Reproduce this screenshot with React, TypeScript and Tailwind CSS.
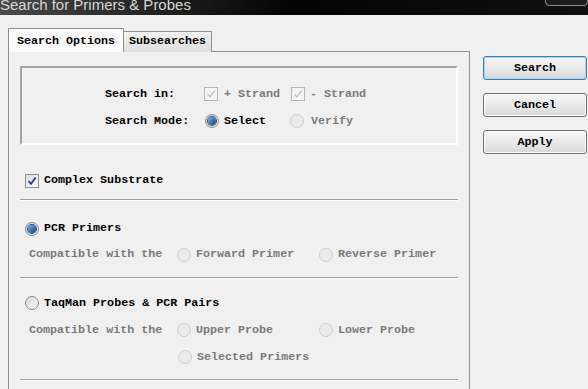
import React from "react";

const FONT = { fontFamily: '"Liberation Mono", "DejaVu Sans Mono", monospace' };

function CheckBox({ checked, disabled }: { checked?: boolean; disabled?: boolean }) {
  return (
    <span
      className={`flex h-[14px] w-[14px] shrink-0 items-center justify-center border ${
        disabled ? "border-[#b5b5b5] bg-[#f4f4f4]" : "border-[#8f8f8f] bg-gradient-to-br from-[#dcdcdc] to-[#ffffff]"
      }`}
    >
      {checked && (
        <svg width="10" height="10" viewBox="0 0 10 10">
          <path
            d="M1.5 5.2 L4 7.8 L8.6 1.6"
            fill="none"
            stroke={disabled ? "#b9b9b9" : "#2a3fa8"}
            strokeWidth={disabled ? 1.2 : 1.8}
          />
        </svg>
      )}
    </span>
  );
}

function Radio({ checked, disabled }: { checked?: boolean; disabled?: boolean }) {
  return (
    <span
      className={`flex h-[14px] w-[14px] shrink-0 items-center justify-center rounded-full border ${
        disabled ? "border-[#cfcfcf] bg-[#eaeaea]" : "border-[#8a8a8a] bg-gradient-to-br from-[#d6d6d6] to-[#fafafa]"
      }`}
    >
      {checked && (
        <span className="h-[8px] w-[8px] rounded-full bg-gradient-to-br from-[#7fb3e6] to-[#0f3f82] ring-1 ring-[#274f84]" />
      )}
    </span>
  );
}

function Option({
  kind,
  label,
  checked,
  disabled,
  width,
  gap,
}: {
  kind: "check" | "radio";
  label: string;
  checked?: boolean;
  disabled?: boolean;
  width: string;
  gap: string;
}) {
  return (
    <div className={`flex items-center ${width} ${gap}`}>
      {kind === "check" ? (
        <CheckBox checked={checked} disabled={disabled} />
      ) : (
        <Radio checked={checked} disabled={disabled} />
      )}
      <span className={disabled ? "text-[#7a7a7a]" : "text-black"}>{label}</span>
    </div>
  );
}

function Separator() {
  return <div className="h-[2px] border-t border-b border-t-[#a0a0a0] border-b-white" />;
}

function DialogButton({ label, focused }: { label: string; focused?: boolean }) {
  return (
    <button
      className={`flex h-[24px] w-[104px] items-center justify-center rounded-[3px] border bg-gradient-to-b from-[#f6f6f6] via-[#eaeaea] to-[#d8d8d8] pt-[2px] font-bold text-black ${
        focused ? "border-[#3c7fb1] shadow-[inset_0_0_0_1px_#a6d8f4]" : "border-[#707070] shadow-[inset_0_0_0_1px_#fbfbfb]"
      }`}
    >
      {label}
    </button>
  );
}

export default function App() {
  return (
    <div
      className="relative h-[389px] w-[588px] overflow-hidden bg-[#f0f0f0] text-[11.7px] font-bold"
      style={FONT}
    >
      {/* window title bar, mostly cut off */}
      <div className="relative h-[15px] overflow-hidden bg-gradient-to-r from-[#4a4a4a] via-[#050505] to-[#101010]">
        <div
          className="-mt-[5px] text-[15px] leading-[20px] font-normal text-[#d6d6d6]"
          style={{ fontFamily: '"Liberation Sans", Arial, sans-serif' }}
        >
          Search for Primers &amp; Probes
        </div>
        <div className="absolute right-0 -top-[6px] h-[12px] w-[43px] rounded-[4px] border border-[#8c8c8c] bg-[#1c1c1c]" />
      </div>

      <div className="flex pl-[8px] pt-[13px]">
        {/* tabs + page */}
        <div className="w-[462px]">
          <div className="relative z-10 flex h-[24px] items-end">
            <div className="flex h-[24px] w-[116px] items-center justify-center border border-b-0 border-[#8e8f8f] bg-[#fbfbfb] pt-[2px] text-black">
              Search Options
            </div>
            <div className="-ml-px flex h-[21px] w-[89px] items-center justify-center border border-b-0 border-[#8e8f8f] bg-gradient-to-b from-[#f2f2f2] to-[#dedede] text-black">
              Subsearches
            </div>
          </div>
          <div className="-mt-px h-[400px] border border-[#8e8f8f] bg-[#f0f0f0] px-[11px] pt-[14px]">
            {/* search in / mode group */}
            <div className="h-[79px] border-2 border-t-[#a3a3a3] border-l-[#a3a3a3] border-b-white border-r-white pt-[13px]">
              <div className="flex h-[27px] items-center pl-[83px]">
                <span className="w-[99px]">Search in:</span>
                <Option kind="check" label="+ Strand" checked disabled width="w-[87px]" gap="gap-[6px]" />
                <Option kind="check" label="- Strand" checked disabled width="w-[100px]" gap="gap-[5px]" />
              </div>
              <div className="flex h-[27px] items-center pl-[83px]">
                <span className="w-[100px]">Search Mode:</span>
                <Option kind="radio" label="Select" checked width="w-[85px]" gap="gap-[5px]" />
                <Option kind="radio" label="Verify" disabled width="w-[100px]" gap="gap-[7px]" />
              </div>
            </div>

            <div className="mt-[24px] flex h-[24px] items-center pl-[5px]">
              <Option kind="check" label="Complex Substrate" checked width="w-[200px]" gap="gap-[5px]" />
            </div>
            <div className="mt-[6px]">
              <Separator />
            </div>

            <div className="mt-[15px] flex h-[26px] items-center pl-[5px]">
              <Option kind="radio" label="PCR Primers" checked width="w-[200px]" gap="gap-[5px]" />
            </div>
            <div className="flex h-[26px] items-center pl-[9px] text-[#7a7a7a]">
              <span className="w-[149px]">Compatible with the</span>
              <Option kind="radio" label="Forward Primer" disabled width="w-[143px]" gap="gap-[5px]" />
              <Option kind="radio" label="Reverse Primer" disabled width="w-[140px]" gap="gap-[5px]" />
            </div>
            <div className="mt-[9px]">
              <Separator />
            </div>

            <div className="mt-[11px] flex h-[27px] items-center pl-[5px]">
              <Option kind="radio" label="TaqMan Probes & PCR Pairs" width="w-[260px]" gap="gap-[5px]" />
            </div>
            <div className="flex h-[27px] items-center pl-[9px] text-[#7a7a7a]">
              <span className="w-[149px]">Compatible with the</span>
              <Option kind="radio" label="Upper Probe" disabled width="w-[143px]" gap="gap-[5px]" />
              <Option kind="radio" label="Lower Probe" disabled width="w-[140px]" gap="gap-[5px]" />
            </div>
            <div className="flex h-[27px] items-center pl-[158px]">
              <Option kind="radio" label="Selected Primers" disabled width="w-[200px]" gap="gap-[5px]" />
            </div>
            <div className="mt-[8px]">
              <Separator />
            </div>
          </div>
        </div>

        {/* dialog buttons */}
        <div className="ml-[13px] mt-[28px] flex flex-col gap-[13px]">
          <DialogButton label="Search" focused />
          <DialogButton label="Cancel" />
          <DialogButton label="Apply" />
        </div>
      </div>
    </div>
  );
}
